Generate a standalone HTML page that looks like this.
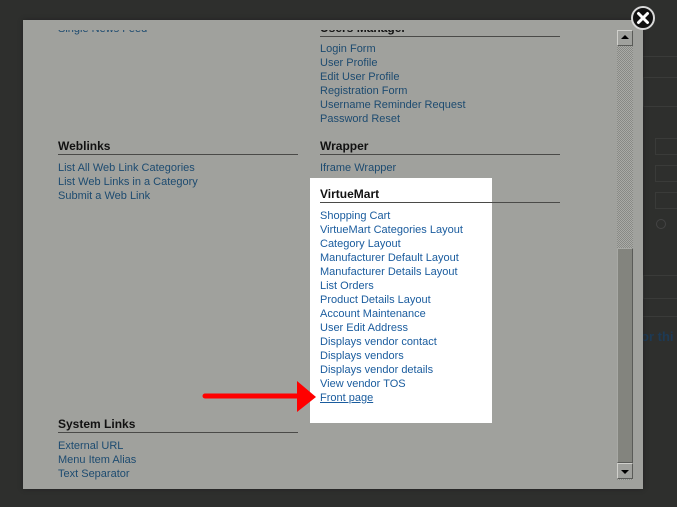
<!DOCTYPE html>
<html><head><meta charset="utf-8"><style>
*{margin:0;padding:0;box-sizing:border-box}
body{width:677px;height:507px;background:#2e2f2d;position:relative;overflow:hidden;font-family:"Liberation Sans",Arial,sans-serif}
.bgbox{position:absolute;border:1px solid #3a3b39}
.modal{position:absolute;left:23px;top:20px;width:620px;height:469px;background:#a0a19d;overflow:hidden;box-shadow:0 0 4px #222}
.clip{position:absolute;left:0;top:10px;width:594px;height:459px;overflow:hidden}
.in{position:absolute;left:0;top:-10px;width:594px;height:469px}
.t{position:absolute;font-size:11px;line-height:14px;color:#1d4b70;white-space:nowrap}
.t.w{color:#1a5c9e}
.h{position:absolute;font-size:12px;font-weight:bold;color:#111;white-space:nowrap}
.ln{position:absolute;height:1px;background:#4a4a48}
.white{position:absolute;left:287px;top:158px;width:182px;height:245px;background:#fff}
</style></head><body>
<div style="position:absolute;left:643px;top:56px;width:40px;height:1px;background:#3a3b39"></div>
<div class="bgbox" style="left:643px;top:77px;width:40px;height:30px"></div>
<div class="bgbox" style="left:655px;top:138px;width:30px;height:17px"></div>
<div class="bgbox" style="left:655px;top:165px;width:30px;height:17px"></div>
<div class="bgbox" style="left:655px;top:192px;width:30px;height:17px"></div>
<div style="position:absolute;left:656px;top:219px;width:10px;height:10px;border:1px solid #444;border-radius:50%"></div>
<div class="bgbox" style="left:643px;top:275px;width:40px;height:24px"></div>
<div style="position:absolute;left:641px;top:329px;font:bold 13px 'Liberation Sans';color:#1d3a55">or thi</div>
<div style="position:absolute;left:643px;top:316px;width:40px;height:1px;background:#3a3b39"></div>

<div class="modal">
 <div class="clip"><div class="in">
  <div class="t" style="left:35px;top:2px">Single News Feed</div>
  <div class="h" style="left:297px;top:1px">Users Manager</div>
  <div class="ln" style="left:297px;top:16px;width:240px"></div>
  <div class="t" style="left:297px;top:22px">Login Form</div>
  <div class="t" style="left:297px;top:36px">User Profile</div>
  <div class="t" style="left:297px;top:50px">Edit User Profile</div>
  <div class="t" style="left:297px;top:64px">Registration Form</div>
  <div class="t" style="left:297px;top:78px">Username Reminder Request</div>
  <div class="t" style="left:297px;top:92px">Password Reset</div>

  <div class="h" style="left:35px;top:119px">Weblinks</div>
  <div class="ln" style="left:35px;top:134px;width:240px"></div>
  <div class="t" style="left:35px;top:141px">List All Web Link Categories</div>
  <div class="t" style="left:35px;top:155px">List Web Links in a Category</div>
  <div class="t" style="left:35px;top:169px">Submit a Web Link</div>

  <div class="h" style="left:297px;top:119px">Wrapper</div>
  <div class="ln" style="left:297px;top:134px;width:240px"></div>
  <div class="t" style="left:297px;top:141px">Iframe Wrapper</div>

  <div class="white"></div>
  <div class="h" style="left:297px;top:167px">VirtueMart</div>
  <div class="ln" style="left:297px;top:182px;width:240px"></div>
  <div class="t w" style="left:297px;top:189px">Shopping Cart</div>
  <div class="t w" style="left:297px;top:203px">VirtueMart Categories Layout</div>
  <div class="t w" style="left:297px;top:217px">Category Layout</div>
  <div class="t w" style="left:297px;top:231px">Manufacturer Default Layout</div>
  <div class="t w" style="left:297px;top:245px">Manufacturer Details Layout</div>
  <div class="t w" style="left:297px;top:259px">List Orders</div>
  <div class="t w" style="left:297px;top:273px">Product Details Layout</div>
  <div class="t w" style="left:297px;top:287px">Account Maintenance</div>
  <div class="t w" style="left:297px;top:301px">User Edit Address</div>
  <div class="t w" style="left:297px;top:315px">Displays vendor contact</div>
  <div class="t w" style="left:297px;top:329px">Displays vendors</div>
  <div class="t w" style="left:297px;top:343px">Displays vendor details</div>
  <div class="t w" style="left:297px;top:357px">View vendor TOS</div>
  <div class="t w" style="left:297px;top:371px;text-decoration:underline">Front page</div>

  <div class="h" style="left:35px;top:397px">System Links</div>
  <div class="ln" style="left:35px;top:412px;width:240px"></div>
  <div class="t" style="left:35px;top:419px">External URL</div>
  <div class="t" style="left:35px;top:433px">Menu Item Alias</div>
  <div class="t" style="left:35px;top:447px">Text Separator</div>
 </div></div>

  <div style="position:absolute;left:594px;top:10px;width:16px;height:450px;background:repeating-conic-gradient(#888985 0 25%,#aaaba7 0 50%) 0 0/2px 2px"></div>
  <div style="position:absolute;left:594px;top:10px;width:16px;height:16px;background:#a0a19d;border:1px solid;border-color:#d0d0cc #5a5b58 #5a5b58 #d0d0cc"></div>
  <div style="position:absolute;left:598px;top:15px;width:0;height:0;border-left:4px solid transparent;border-right:4px solid transparent;border-bottom:4px solid #000"></div>
  <div style="position:absolute;left:594px;top:228px;width:16px;height:215px;background:#83847e;border:1px solid;border-color:#a8a9a5 #5a5b58 #5a5b58 #a8a9a5"></div>
  <div style="position:absolute;left:594px;top:443px;width:16px;height:16px;background:#a0a19d;border:1px solid;border-color:#d0d0cc #5a5b58 #5a5b58 #d0d0cc"></div>
  <div style="position:absolute;left:598px;top:450px;width:0;height:0;border-left:4px solid transparent;border-right:4px solid transparent;border-top:4px solid #000"></div>
</div>

<svg style="position:absolute;left:0;top:0" width="677" height="507">
  <line x1="205" y1="396" x2="302" y2="396" stroke="#ff0000" stroke-width="5" stroke-linecap="round"/>
  <polygon points="297,381 316,397 297,412" fill="#ff0000"/>
  <circle cx="643" cy="18" r="11" fill="#111" stroke="#d8d8d8" stroke-width="2"/>
  <path d="M638.5 13.5 L647.5 22.5 M647.5 13.5 L638.5 22.5" stroke="#fff" stroke-width="3" stroke-linecap="round"/>
</svg>
</body></html>
